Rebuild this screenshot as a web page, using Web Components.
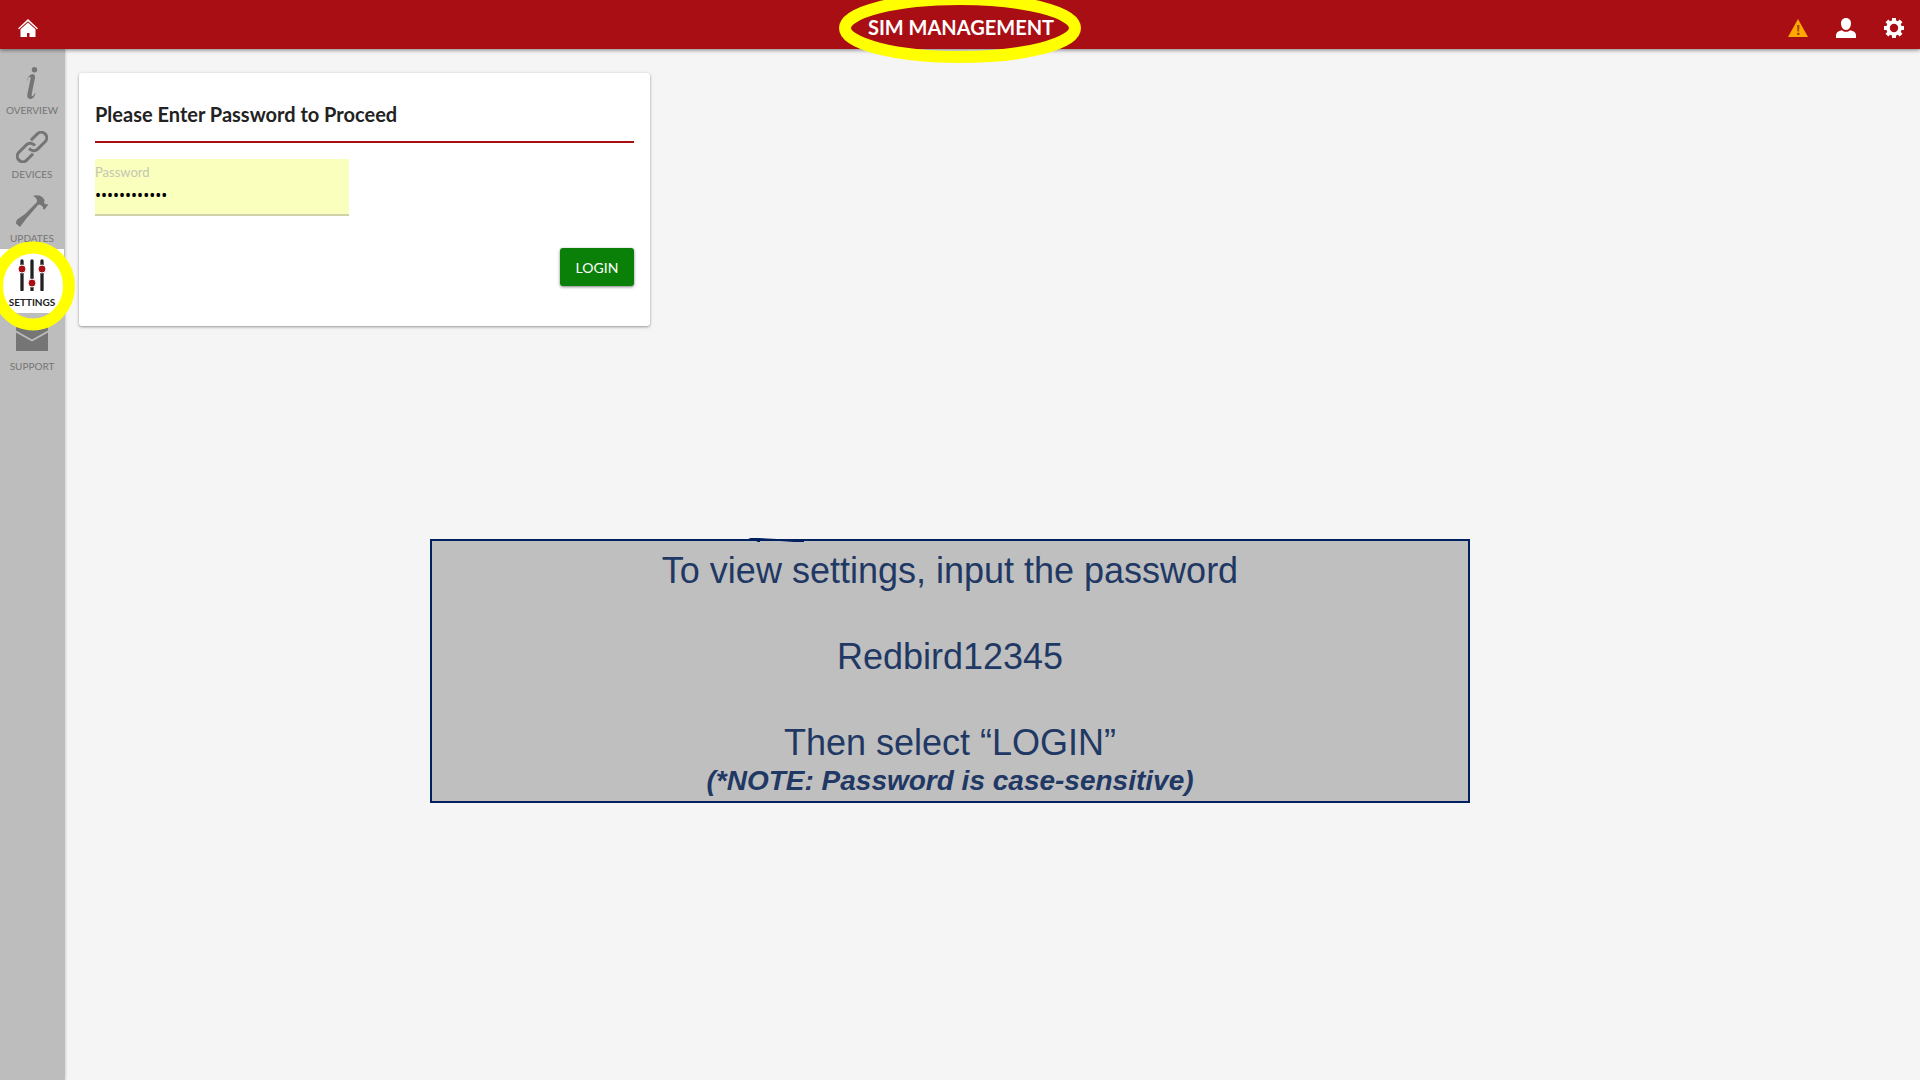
<!DOCTYPE html>
<html lang="en">
<head>
<meta charset="utf-8">
<title>Sim Management</title>
<style>
html, body { height: 100%; margin: 0; }
body { font-family: Lato, "Open Sans", sans-serif; background: #f5f5f5; color: #222; }
</style>
</head>
<body>
<sim-app></sim-app>

<template id="t-app">
<style>
:host { display: flex; flex-direction: column; min-height: 100vh; position: relative; overflow: hidden; }
.body { flex: 1; display: flex; }
main { flex: 1; padding: 24px 14px; }
</style>
<app-header heading="SIM MANAGEMENT"></app-header>
<div class="body">
  <side-nav>
    <nav-item label="OVERVIEW"><svg viewBox="0 0 32 32" width="32" height="32" fill="#757575"><circle cx="18.500" cy="2.700" r="2.700"/><path d="M11 13.500C12 9 14.500 7.200 16.600 7.200c2.300 0 2.900 1.800 2.300 4.400l-3.100 14.900c-.5 2.300.2 3 1 2.600 1-.5 1.500-1.800 2-3.100l.7.400c-1 3.700-3 5.600-5.200 5.600-2.400 0-3.500-1.700-2.900-4.900l3-14.600c.4-1.900 0-2.800-.9-2.700-1.200.2-1.500 1.900-2 3.800z"/></svg></nav-item>
    <nav-item label="DEVICES"><svg viewBox="0 0 32 32" width="32" height="32"><g transform="translate(16 16) rotate(-45)" fill="none" stroke="#757575" stroke-width="3"><path id="link" d="M4-5.500H13A5.500 5.500 0 0 1 13 5.500H2.500A5.500 5.500 0 0 1-3-1"/><path d="M-4 5.500H-13A5.500 5.500 0 0 1-13-5.500H-2.500A5.500 5.500 0 0 1 3 1"/></g></svg></nav-item>
    <nav-item label="UPDATES"><svg viewBox="0 0 32 32" width="32" height="32" fill="#757575"><path d="M17 1c5-2 9.500 0 11.500 4l-.5 3 2 1.500 1.500-.5.500 1-3.500 4.500-1.500-.5V12l-3-2.500-2 .5L10 24l-6 8-4-3.500c0-2 .5-3.500 2-4.500l7-5L21 7c.5-2.500-1-4.500-4-6z"/></svg></nav-item>
    <nav-item label="SETTINGS" active><svg viewBox="0 0 32 32" width="32" height="32"><path d="M6 2v29M16 2v29M26 2v29" stroke="#222" stroke-width="3.300" stroke-linecap="round"/><g fill="#a90e14" stroke="#fff" stroke-width="1"><circle cx="6" cy="10" r="4"/><circle cx="16" cy="24" r="4"/><circle cx="26" cy="10" r="4"/></g></svg></nav-item>
    <nav-item label="SUPPORT"><svg viewBox="0 0 32 32" width="32" height="32" fill="#757575"><path d="M0 4h32v3.500L16 16.500 0 7.500zM0 9.500l16 9 16-9V28H0z"/></svg></nav-item>
  </side-nav>
  <main><login-card heading="Please Enter Password to Proceed"></login-card></main>
</div>
<note-box>
  <p>To view settings, input the password</p>
  <p>Redbird12345</p>
  <p>Then select “LOGIN”</p>
  <strong slot="note">(*NOTE: Password is case-sensitive)</strong>
</note-box>
</template>

<template id="t-header">
<style>
:host { display: block; position: relative; z-index: 2; }
header { height: 49px; background: #a90e14; box-shadow: 0 1px 4px rgba(0,0,0,.5); display: grid; grid-template-columns: 1fr auto 1fr; align-items: center; padding: 6px 16px 0 18px; box-sizing: border-box; }
h1 { margin: 0; font-size: 20px; line-height: 30px; padding-bottom: 2px; font-weight: 700; color: #fff; position: relative; }
h1 svg { position: absolute; left: 50%; top: 50%; transform: translate(-50%, -50%); }
button { border: 0; padding: 0; background: none; display: block; height: 20px; cursor: pointer; }
.right { display: flex; justify-content: flex-end; gap: 28px; }
</style>
<header>
  <div><button aria-label="Home"><svg width="20" height="20" viewBox="0 0 20 20" fill="#fff"><path d="M10 1L0 10.500l1 .8L10 3.200l9 8.100 1-.8z"/><path d="M10 4.500L2.500 11.200V19H9v-4h2.500v4h6v-7.800z"/></svg></button></div>
  <h1><span></span><svg width="244" height="72" viewBox="0 0 244 72" fill="none" stroke="#ff0" stroke-width="12"><ellipse cx="121" cy="36" rx="115" ry="29"/></svg></h1>
  <div class="right">
    <button aria-label="Alerts"><svg width="20" height="20" viewBox="0 0 20 20"><path d="M10 1l10 18H0z" fill="#ffa800"/><path d="M9 7h2.500l-.4 6.500H9.400zM9 14.800h2.500V17H9z" fill="#a94a0a"/></svg></button>
    <button aria-label="Account"><svg width="20" height="20" viewBox="0 0 20 20" fill="#fff"><path d="M10 0c3.200 0 5 2.300 5 5.500S13 12 10 12 5 8.700 5 5.500 6.800 0 10 0z"/><path d="M6 12.200c2.200 2 5.800 2 8 0 4 .8 6 2.300 6 5.300V20H0v-2.500c0-3 2-4.500 6-5.300z"/></svg></button>
    <button aria-label="Preferences"><svg width="20" height="20" viewBox="0 0 20 20"><g fill="none" stroke="#fff"><circle cx="10" cy="10" r="6" stroke-width="3.600"/><path d="M10 0v4M10 16v4M0 10h4M16 10h4M2.900 2.900l3 3M14.100 14.100l3 3M2.900 17.100l3-3M14.100 5.900l3-3" stroke-width="4"/></g></svg></button>
  </div>
</header>
</template>

<template id="t-nav">
<style>
:host { display: block; width: 65px; background: #bdbdbd; box-shadow: 0 0 3px rgba(0,0,0,.25); }
nav { display: flex; flex-direction: column; padding-top: 8px; }
</style>
<nav><slot></slot></nav>
</template>

<template id="t-item">
<style>
:host { display: block; position: relative; margin-right: 1px; }
:host([active]) { z-index: 3; background: #fff; }
a { display: flex; flex-direction: column; align-items: center; gap: 4px; height: 64px; padding-top: 10px; box-sizing: border-box; color: #757575; text-decoration: none; font-size: 10px; line-height: 14px; }
:host([active]) a { color: #222; font-weight: 700; }
.ring { display: none; position: absolute; left: -9px; top: -8px; }
:host([active]) .ring { display: block; }
</style>
<a href="#"><slot></slot><span></span></a>
<svg class="ring" width="84" height="90" viewBox="0 0 84 90" fill="none" stroke="#ff0" stroke-width="12"><ellipse cx="42" cy="45" rx="36" ry="38.500"/></svg>
</template>

<template id="t-login">
<style>
:host { display: block; max-width: 571px; background: #fff; border-radius: 3px; box-shadow: 0 1px 3px rgba(0,0,0,.4); }
form { display: flex; flex-direction: column; padding: 24px 16px 40px; }
h2 { margin: 0 0 16px; padding-bottom: 10px; border-bottom: 2px solid #a90e14; font-size: 20px; line-height: 34px; font-weight: 700; color: #222; }
.field { width: 254px; height: 57px; box-sizing: border-box; background: #faffbd; border-bottom: 2px solid #d0d3a8; display: flex; flex-direction: column; padding-top: 5px; }
label { font-size: 13px; line-height: 16px; color: #c4c6b4; }
input { border: 0; padding: 0; background: none; outline: 0; height: 30px; font: 16px "Noto Sans", sans-serif; color: #000; }
button { align-self: flex-end; margin-top: 32px; height: 38px; width: 74px; border: 0; border-radius: 3px; background: #0b8009; color: #fff; font: 14px Lato, sans-serif; box-shadow: 0 1px 3px rgba(0,0,0,.5); }
</style>
<form>
  <h2></h2>
  <div class="field"><label for="pw">Password</label><input id="pw" type="password" value="Redbird12345"></div>
  <button type="button">LOGIN</button>
</form>
</template>

<template id="t-note">
<style>
:host { display: block; position: absolute; z-index: 4; left: 430px; right: 450px; top: 539px; box-sizing: border-box; height: 264px; border: 2px solid #002060; background: #bfbfbf; color: #1f3864; text-align: center; font-family: "Liberation Sans", Arial, sans-serif; padding-top: 8px; }
::slotted(p) { margin: 0 0 43px; font-size: 36px; line-height: 43px; }
::slotted(p:last-of-type) { margin: 0; }
::slotted(strong) { display: block; font-size: 28px; line-height: 34px; font-style: italic; }
svg { position: absolute; left: 316px; top: -3px; }
</style>
<svg width="56" height="5" viewBox="0 0 56 5"><path d="M0 0h10l19 1v1H12v2h-2L8 3zM32 3h24v1H46z" fill="#002060"/></svg>
<slot></slot><slot name="note"></slot>
</template>

<script>
class Base extends HTMLElement {
  constructor() {
    super();
    this.attachShadow({ mode: "open" }).append(
      document.getElementById(this.constructor.template).content.cloneNode(true));
  }
  setText(selector, attribute) {
    this.shadowRoot.querySelector(selector).textContent = this.getAttribute(attribute);
  }
}
class AppHeader extends Base {
  static template = "t-header";
  connectedCallback() { this.setText("h1 span", "heading"); }
}
class SideNav extends Base { static template = "t-nav"; }
class NavItem extends Base {
  static template = "t-item";
  connectedCallback() { this.setText("a span", "label"); }
}
class LoginCard extends Base {
  static template = "t-login";
  connectedCallback() { this.setText("h2", "heading"); }
}
class NoteBox extends Base { static template = "t-note"; }
class SimApp extends Base { static template = "t-app"; }
customElements.define("app-header", AppHeader);
customElements.define("side-nav", SideNav);
customElements.define("nav-item", NavItem);
customElements.define("login-card", LoginCard);
customElements.define("note-box", NoteBox);
customElements.define("sim-app", SimApp);
</script>
</body>
</html>
